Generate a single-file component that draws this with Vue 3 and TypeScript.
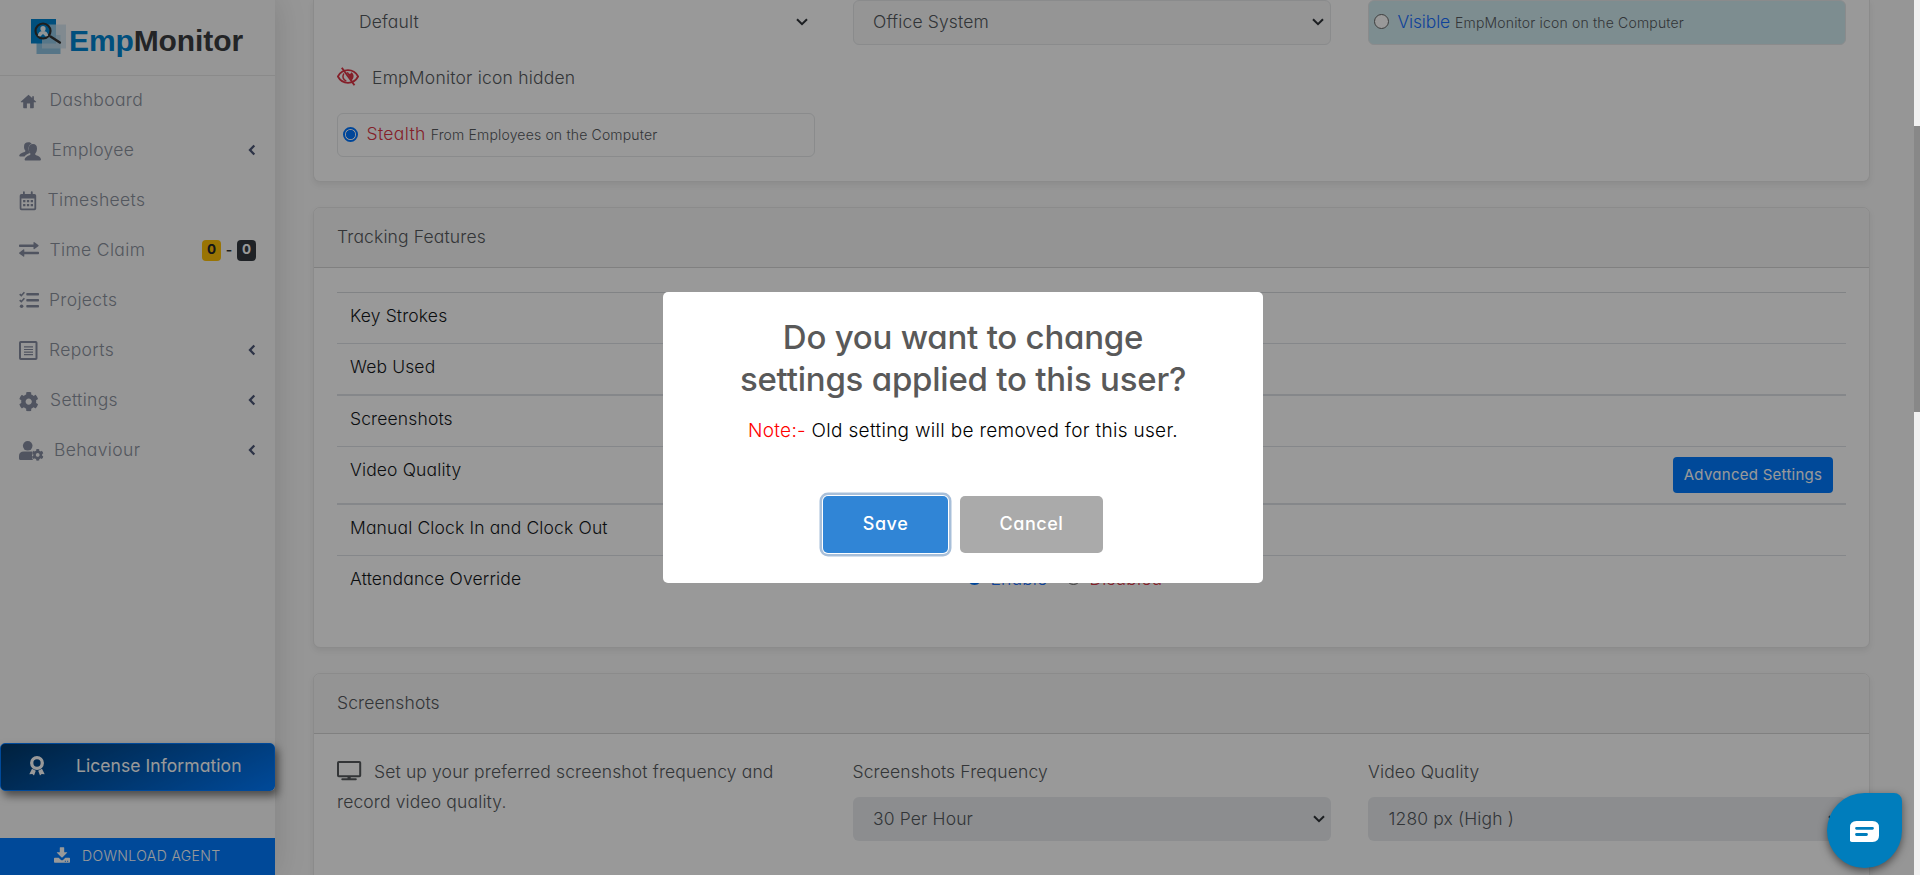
<script setup lang="ts">
interface NavItem {
  icon: string
  label: string
  iconWidth: number
  gap: number
  arrow?: boolean
  badges?: boolean
}

const nav: NavItem[] = [
  { icon: 'home', label: 'Dashboard', iconWidth: 18, gap: 12.5 },
  { icon: 'users', label: 'Employee', iconWidth: 22, gap: 10.5, arrow: true },
  { icon: 'calendar', label: 'Timesheets', iconWidth: 18, gap: 10.5 },
  { icon: 'exchange', label: 'Time Claim', iconWidth: 20, gap: 10.5, badges: true },
  { icon: 'tasks', label: 'Projects', iconWidth: 20, gap: 10 },
  { icon: 'report', label: 'Reports', iconWidth: 19, gap: 11, arrow: true },
  { icon: 'cog', label: 'Settings', iconWidth: 20, gap: 11, arrow: true },
  { icon: 'usercog', label: 'Behaviour', iconWidth: 25, gap: 10, arrow: true },
]

interface FeatureRow {
  label: string
  kind: string
  advanced?: boolean
  radios?: boolean
}

const features: FeatureRow[] = [
  { label: 'Key Strokes', kind: 'first' },
  { label: 'Web Used', kind: '' },
  { label: 'Screenshots', kind: 'thick' },
  { label: 'Video Quality', kind: 'tall', advanced: true },
  { label: 'Manual Clock In and Clock Out', kind: 'thick' },
  { label: 'Attendance Override', kind: '', radios: true },
]

const cogPath =
  'M487.4 315.7l-42.6-24.6c4.3-23.2 4.3-47 0-70.2l42.6-24.6c4.9-2.8 7.1-8.6 5.5-14-11.1-35.6-30-67.8-54.7-94.6-3.8-4.1-10-5.1-14.8-2.3L380.8 110c-17.9-15.4-38.5-27.3-60.8-35.1V25.8c0-5.6-3.9-10.5-9.4-11.7-36.7-8.2-74.3-7.8-109.2 0-5.5 1.2-9.4 6.1-9.4 11.7V75c-22.2 7.9-42.8 19.8-60.8 35.1L88.7 85.5c-4.9-2.8-11-1.9-14.8 2.3-24.7 26.7-43.6 58.9-54.7 94.6-1.7 5.4.6 11.2 5.5 14L67.3 221c-4.3 23.2-4.3 47 0 70.2l-42.6 24.6c-4.9 2.8-7.1 8.6-5.5 14 11.1 35.6 30 67.8 54.7 94.6 3.8 4.1 10 5.1 14.8 2.3l42.6-24.6c17.9 15.4 38.5 27.3 60.8 35.1v49.2c0 5.6 3.9 10.5 9.4 11.7 36.7 8.2 74.3 7.8 109.2 0 5.5-1.2 9.4-6.1 9.4-11.7v-49.2c22.2-7.9 42.8-19.8 60.8-35.1l42.6 24.6c4.9 2.8 11 1.9 14.8-2.3 24.7-26.7 43.6-58.9 54.7-94.6 1.5-5.5-.7-11.3-5.6-14.1zM256 336c-44.1 0-80-35.9-80-80s35.9-80 80-80 80 35.9 80 80-35.9 80-80 80z'
</script>

<template>
  <div class="app">
    <aside class="sidebar">
      <div class="brand">
        <svg class="brand-mark" width="36" height="36" viewBox="0 0 36 36">
          <rect x="5.500" y="16" width="24" height="19" fill="#8fc3e2" />
          <rect x="0" y="0" width="25" height="24.500" fill="#0084d1" />
          <rect x="11" y="5.500" width="24" height="24" fill="#c9dfec" opacity=".72" />
          <circle cx="12" cy="12" r="7.500" fill="#0084d1" stroke="#333" stroke-width="2.200" />
          <circle cx="12" cy="9.700" r="2.600" fill="#f4f8fb" />
          <path d="M6.800 16.500c.5-3.300 2.300-4.500 5.200-4.500s4.700 1.200 5.200 4.500c-1 .8-2 1-2.600 1L12 15l-2.600 2.500c-1 0-1.900-.3-2.600-1z" fill="#f4f8fb" />
          <path d="M19.500 17.500l9.300 6" stroke="#333" stroke-width="2.600" stroke-linecap="round" />
        </svg>
        <span class="brand-name"><span class="brand-emp">Emp</span>Monitor</span>
      </div>

      <nav class="menu">
        <a v-for="item in nav" :key="item.label" class="menu-item">
          <svg class="menu-icon" :width="item.iconWidth" height="24" :viewBox="`0 0 ${item.iconWidth} 24`" :style="{ marginRight: item.gap + 'px' }">
            <path v-if="item.icon === 'home'" d="M9.500 6.700L1.700 13.700l.3.600h2.200V19.500q0 .7.7.7h3V15.500h3.200v4.700h3q.7 0 .7-.7V14.300h2.200l.2-.6-2.300-2V8.200h-1.700v1.900z" />
            <g v-else-if="item.icon === 'users'">
              <path d="M9.300 4.200c2 0 2.800.6 3.300 1.500-2.700 1-3.500 3.400-2.800 6.800.2 1 .8 1.600 1.300 2.400-1.900.7-4.400 1.500-5.600 3.600H1c-.7 0-.9-.5-.7-1.200.7-1.900 3.200-2.500 5.300-3.300.9-.4 1-1.100.5-1.700C4.900 10.700 5 9.700 5.100 7.800 5.200 5.500 6.700 4.200 9.300 4.200z" />
              <path d="M14 6c2.700 0 4 1.700 4 4.400 0 2.200-.7 3.800-1.700 5-.4.800-.1 1.500.8 1.900 2 .8 4.200 1.500 4.800 3.800.2.900-.2 1.300-.9 1.300H6.500c-.7 0-1-.6-.8-1.300.6-2.200 2.800-3 4.800-3.800.9-.4 1.200-1.100.8-1.900-1-1.200-1.500-2.800-1.500-5C9.800 7.700 11.300 6 14 6z" />
            </g>
            <g v-else-if="item.icon === 'calendar'">
              <path fill-rule="evenodd" d="M4 4.300q0-1 .9-1t.9 1V6h6V4.300q0-1 1-1t.9 1V6h1.800Q17.200 6 17.200 7.800v12.700q0 1.700-1.700 1.700h-13Q.7 22.200.7 20.500V7.800Q.7 6 2.500 6H4zM2.400 10.400v9.700q0 .5.500.5h12q.5 0 .5-.5v-9.700z" />
              <path d="M4.100 12h2.300v2.300H4.100zm3.800 0h2.300v2.300H7.900zm3.800 0H14v2.300h-2.300zm-7.600 4h2.300v2.300H4.100zm3.800 0h2.300v2.300H7.900zm3.800 0H14v2.300h-2.300z" />
            </g>
            <path v-else-if="item.icon === 'exchange'" d="M.8 6.500h13.700V4.700q0-1.200 1-.5l3.800 2.900q.6.600 0 1.100l-3.800 2.900q-1 .7-1-.5V8.900H.8Q0 8.900 0 8.200V7.200q0-.7.800-.7zm18.400 7.300H5.300V12q0-1.200-1-.5L.4 14.500q-.7.600 0 1.200l3.900 2.800q1 .7 1-.5v-1.800h13.900q.8 0 .8-.7v-1q0-.7-.8-.7z" />
            <g v-else-if="item.icon === 'tasks'">
              <path d="M8 5h11.300q.7 0 .7.700v1q0 .7-.7.7H8q-.7 0-.7-.7v-1Q7.300 5 8 5zm0 6h11.300q.7 0 .7.700v1q0 .7-.7.700H8q-.7 0-.7-.7v-1q0-.7.7-.7zm0 6h11.300q.7 0 .7.700v1q0 .7-.7.700H8q-.7 0-.7-.7v-1q0-.7.700-.7z" />
              <path d="M.7 6.200l1.600 1.500 3.100-3.500M.7 12.200l1.600 1.500 3.100-3.500" fill="none" stroke="currentColor" stroke-width="1.600" />
              <circle cx="2.600" cy="18.200" r="1.800" />
            </g>
            <g v-else-if="item.icon === 'report'">
              <rect x="1" y="3.900" width="16.500" height="17.200" rx=".8" fill="none" stroke="currentColor" stroke-width="2" />
              <path d="M5 8.200h9v1.200H5zm0 2.700h9v1.200H5zm0 2.600h9v1.200H5zm0 2.600h9v1.200H5z" />
            </g>
            <svg v-else-if="item.icon === 'cog'" x="-.3" y="3.600" width="20" height="20" viewBox="0 0 512 512"><path :d="cogPath" /></svg>
            <g v-else>
              <circle cx="8.700" cy="7.800" r="4.800" />
              <path d="M5 13.500h7.500q.6 0 1.200.3c-.8.800-.8 1.600-.2 2.400-.7 1.200-.7 2.400 0 3.400-.4.800-.2 1.600.6 2.400H1.500Q0 22 0 20.500V18q0-4.500 5-4.500z" />
              <svg x="12.700" y="10.900" width="12" height="12" viewBox="0 0 512 512"><path :d="cogPath" /></svg>
            </g>
          </svg>
          <span class="menu-label">{{ item.label }}</span>
          <svg v-if="item.arrow" class="menu-arrow" width="8" height="12" viewBox="0 0 8 12">
            <path d="M6.300 1.500L2 6l4.300 4.500" fill="none" stroke="currentColor" stroke-width="2.300" />
          </svg>
          <span v-if="item.badges" class="badges">
            <b class="badge warning">0</b><span class="dash">-</span><b class="badge dark">0</b>
          </span>
        </a>
      </nav>

      <button class="license">
        <svg width="16" height="20" viewBox="0 0 16 20">
          <circle cx="8" cy="7" r="5.300" fill="none" stroke="currentColor" stroke-width="3.300" />
          <path d="M3 12.700l3.800 2L5 19.600 3.300 18l-3 .2zM13 12.700l-3.800 2 1.800 4.900 1.700-1.600 3 .2z" fill="currentColor" />
        </svg>
        <span>License Information</span>
      </button>
      <a class="download">
        <svg width="16" height="16" viewBox="0 0 16 16">
          <path fill="currentColor" fill-rule="evenodd" d="M6.300.2h3.400q.5 0 .5.500v4.500h2.700q.6.100.2.600L8.400 10.400q-.4.300-.8 0L2.900 5.800q-.4-.5.200-.6h2.700V.7q0-.5.500-.5zM.8 10.800h3.900l2 1.900q1.300 1 2.600 0l2-1.900h3.900q.8 0 .8.700v3.600q0 .7-.8.700H.8q-.8 0-.8-.7v-3.600q0-.7.800-.7zm10 2.900v1.100h1.100v-1.100zm2.300 0v1.100h1.100v-1.100z" />
        </svg>
        <span>DOWNLOAD AGENT</span>
      </a>
    </aside>

    <main class="content">
      <section class="card card-top">
        <div class="grid">
          <div class="column">
            <div class="select plain">
              <span>Default</span>
              <svg width="12" height="8" viewBox="0 0 12 8"><path d="M1 1.200l5 5 5-5" fill="none" stroke="currentColor" stroke-width="2" /></svg>
            </div>
            <div class="hidden-note">
              <svg width="22" height="20" viewBox="0 0 22 20">
                <path d="M.9 9.500C3.200 5.200 6.700 3.200 11 3.200s7.800 2 10.100 6.300c-2.300 4.300-5.800 6.300-10.100 6.300S3.200 13.800.9 9.500z" fill="none" stroke="currentColor" stroke-width="1.800" />
                <path d="M6.800 6.500c-1.800 3.500-.7 6.200 2.500 7.600" fill="none" stroke="currentColor" stroke-width="1.500" />
                <path d="M9.500 5.500l1.700-.4c.1 1.300.9 2 2.300 1.700l.8-1.500c2 1.200 2.600 3 2.200 4.800-.2 1.500-1 2.500-2.100 3.300z" fill="currentColor" />
                <path d="M4.800.7l12.700 17.600" stroke="currentColor" stroke-width="1.900" />
              </svg>
              <span>EmpMonitor icon hidden</span>
            </div>
            <label class="option">
              <i class="radio checked"></i><span class="danger">Stealth</span><small>From Employees on the Computer</small>
            </label>
          </div>
          <div class="column">
            <div class="select soft">
              <span>Office System</span>
              <svg width="12" height="8" viewBox="0 0 12 8"><path d="M1 1.200l5 5 5-5" fill="none" stroke="currentColor" stroke-width="2" /></svg>
            </div>
          </div>
          <div class="column">
            <label class="option visible-option">
              <i class="radio"></i><span class="primary">Visible</span><small>EmpMonitor icon on the Computer</small>
            </label>
          </div>
        </div>
      </section>

      <section class="card card-features">
        <header class="card-header">Tracking Features</header>
        <div class="features">
          <div v-for="row in features" :key="row.label" class="feature" :class="row.kind">
            <span class="feature-name">{{ row.label }}</span>
            <span v-if="row.radios" class="feature-radios">
              <i class="radio checked"></i><span class="primary">Enable</span>
              <i class="radio"></i><span class="danger">Disabled</span>
            </span>
            <button v-if="row.advanced" class="advanced">Advanced Settings</button>
          </div>
        </div>
      </section>

      <section class="card card-shots">
        <header class="card-header">Screenshots</header>
        <div class="grid shots">
          <p class="intro">
            <svg width="25" height="20" viewBox="0 0 25 20">
              <rect x="1" y="1" width="22.200" height="14.200" rx=".8" fill="none" stroke="currentColor" stroke-width="2" />
              <path d="M10.500 15h3.200v2.200h5.200q.9 0 .9 1t-.9 1H5.200q-.9 0-.9-1t.9-1h5.300z" fill="currentColor" />
            </svg>Set up your preferred screenshot frequency and record video quality.
          </p>
          <div class="column">
            <div class="field-label">Screenshots Frequency</div>
            <div class="select disabled">
              <span>30 Per Hour</span>
              <svg width="12" height="8" viewBox="0 0 12 8"><path d="M1 1.200l5 5 5-5" fill="none" stroke="currentColor" stroke-width="2" /></svg>
            </div>
          </div>
          <div class="column">
            <div class="field-label">Video Quality</div>
            <div class="select disabled">
              <span>1280 px (High )</span>
              <svg width="12" height="8" viewBox="0 0 12 8"><path d="M1 1.200l5 5 5-5" fill="none" stroke="currentColor" stroke-width="2" /></svg>
            </div>
          </div>
        </div>
      </section>
    </main>

    <div class="overlay">
      <div class="modal">
        <h2>Do you want to change<br />settings applied to this user?</h2>
        <p><span class="note">Note:-</span> Old setting will be removed for this user.</p>
        <div class="actions">
          <button class="save">Save</button>
          <button class="cancel">Cancel</button>
        </div>
      </div>
    </div>

    <div class="scrollbar"><div class="thumb"></div></div>

    <button class="chat" aria-label="Chat">
      <svg width="29" height="21" viewBox="0 0 29 21">
        <path d="M6.500 0h16Q29 0 29 6.500v8Q29 21 22.500 21H1.800Q0 21 0 19.200V6.500Q0 0 6.500 0z" fill="#fff" />
        <path d="M6.500 7.300h16M6.500 13.500h10" stroke="#007dbc" stroke-width="2.800" stroke-linecap="round" />
      </svg>
    </button>
  </div>
</template>

<style>
body {
  overflow: hidden;
}
</style>

<style scoped>
.app {
  position: relative;
  display: flex;
  width: 1920px;
  height: 875px;
  overflow: hidden;
  background: #fafafa;
  font-family: Inter, "Liberation Sans", sans-serif;
  font-feature-settings: "cv11";
  font-size: 17.5px;
  font-weight: 350;
  letter-spacing: 0.008em;
  line-height: 30px;
  color: #55595d;
}
.app * {
  box-sizing: border-box;
}
button {
  border: 0;
  padding: 0;
  font: inherit;
  font-feature-settings: inherit;
  letter-spacing: inherit;
}
svg {
  flex: none;
  display: block;
}

/* Sidebar */
.sidebar {
  position: relative;
  z-index: 1;
  display: flex;
  flex-direction: column;
  width: 275px;
  height: 875px;
  background: #fafafa;
  box-shadow: 0 0 30px rgba(0, 0, 0, 0.14);
}
.brand {
  display: flex;
  height: 76px;
  padding: 19px 0 0 31px;
  border-bottom: 1px solid #e6e6e6;
}
.brand-name {
  margin: 5px 0 0 2px;
  font: bold 30px/34px "Liberation Sans", Arial, sans-serif;
  letter-spacing: -0.1px;
  color: #3b3d40;
}
.brand-emp {
  color: #0084d1;
}
.menu-item {
  display: flex;
  align-items: center;
  height: 50px;
  padding: 0 19px 2px;
  color: #8b919d;
}
.menu-icon {
  fill: currentColor;
  color: #858ca0;
}
.menu-label {
  letter-spacing: 0.02em;
}
.menu-arrow {
  margin-left: auto;
  color: #4b5676;
}
.badges {
  display: flex;
  align-items: center;
  margin-left: auto;
  font-size: 14px;
  color: #333;
}
.badge {
  width: 19px;
  height: 21px;
  border-radius: 4px;
  font-weight: 700;
  font-size: 13.5px;
  line-height: 19px;
  text-align: center;
  letter-spacing: 0;
}
.dash {
  width: 16px;
  font-weight: 600;
  line-height: 20px;
  text-align: center;
}
.warning {
  background: #ffc107;
  color: #212529;
}
.dark {
  background: #343a40;
  color: #fff;
}
.license {
  display: flex;
  align-items: center;
  width: 275px;
  height: 48px;
  margin-top: 267px;
  padding: 0 0 2px 28px;
  border: 1px solid #007bff;
  border-radius: 5px;
  background: linear-gradient(155deg, #003767 0%, #007bff 100%);
  box-shadow: 3px 5px 8px rgba(0, 0, 0, 0.5);
  color: #fff;
  font-size: 17.5px;
  font-weight: 400;
  letter-spacing: 0.004em;
}
.license span {
  margin-left: 31px;
}
.download {
  display: flex;
  align-items: center;
  height: 37px;
  margin-top: 47px;
  padding: 0 0 4px 54px;
  background: #007bff;
  color: #fff;
  font-size: 14px;
  letter-spacing: 0.027em;
}
.download span {
  margin: 2px 0 0 12px;
}

/* Content */
.content {
  flex: 1;
  padding-left: 38px;
}
.card {
  width: 1557px;
  border: 1px solid #e8e8e8;
  border-radius: 7px;
  background: #fff;
  box-shadow: 0 3px 6px rgba(0, 0, 0, 0.07);
}
.card-top {
  height: 182px;
  border-top: 0;
  border-radius: 0 0 7px 7px;
}
.card-features {
  height: 441px;
  margin-top: 25px;
}
.card-shots {
  height: 300px;
  margin-top: 25px;
}
.card-header {
  height: 60px;
  padding: 14px 23px 0;
  border-bottom: 1px solid #d6d6d6;
  border-radius: 6px 6px 0 0;
  background: #f7f7f7;
}
.grid {
  display: grid;
  grid-template-columns: repeat(3, 478px);
  column-gap: 37.5px;
  padding-left: 23px;
}
.select {
  display: flex;
  align-items: center;
  justify-content: space-between;
  height: 45px;
  padding: 0 6px 1px 19.5px;
  border: 1px solid #e6e8ea;
  border-radius: 6px;
  color: #54595e;
}
.select svg {
  color: #2f3338;
}
.plain {
  border-color: transparent;
  padding-left: 21px;
}
.soft {
  background: #f8f8f8;
}
.disabled {
  height: 44px;
  border: 0;
  padding-left: 20.5px;
  background: #e9ecef;
}
.hidden-note {
  display: flex;
  align-items: center;
  height: 30px;
  margin-top: 18px;
  letter-spacing: 0.012em;
}
.hidden-note svg {
  color: #dc3545;
  margin: 0 13px 2px 0;
}
.option {
  display: flex;
  align-items: center;
  height: 44px;
  margin-top: 20px;
  padding: 0 0 2px 5px;
  border: 1px solid #e6e8ea;
  border-radius: 6px;
}
.option > span {
  margin: 0 5px 0 8.5px;
}
.option small {
  padding-top: 2px;
  font-size: 14px;
  letter-spacing: 0.012em;
}
.option > .danger {
  letter-spacing: 0.02em;
}
.visible-option {
  height: 45px;
  margin-top: 0;
  padding-bottom: 2px;
  background: #d1ecf1;
}
.visible-option > .primary {
  letter-spacing: -0.01em;
}
.radio {
  width: 15px;
  height: 15px;
  border: 1.5px solid #666;
  border-radius: 50%;
  background: #fff;
}
.checked {
  border: 2px solid #0075ff;
  background: radial-gradient(circle, #0075ff 4.3px, #fff 5px);
}
.danger {
  color: #dc3545;
}
.primary {
  color: #1a6fff;
}
.features {
  padding: 24px 23px 0;
}
.feature {
  display: flex;
  height: 51px;
  padding: 8px 13px 0;
  border-top: 1px solid #dee2e6;
  color: #15181b;
}
.feature.first {
  border-top-color: #d8dbde;
}
.feature.thick {
  height: 52px;
  border-top: 2px solid #dee2e6;
}
.feature.tall {
  height: 57px;
}
.feature-name {
  width: 617px;
}
.feature-radios {
  display: flex;
  align-items: center;
  height: 30px;
}
.feature-radios .radio {
  margin: 0 8.5px 3px 0;
}
.feature-radios span {
  width: 75.500px;
}
.advanced {
  width: 160px;
  height: 36px;
  margin: 2px 0 0 auto;
  border-radius: 4px;
  background: #007bff;
  color: #fff;
  font-size: 15px;
  font-weight: 400;
  letter-spacing: 0.018em;
}
.shots {
  padding-top: 23px;
}
.intro {
  margin: 0;
  padding-right: 40px;
}
.intro svg {
  display: inline-block;
  margin: 0 12px -3px 0;
}
.field-label {
  height: 40px;
}

/* Dialog */
.overlay {
  position: absolute;
  z-index: 2;
  inset: 0 6px 0 0;
  display: flex;
  align-items: center;
  justify-content: center;
  background: rgba(0, 0, 0, 0.4);
}
.modal {
  width: 600px;
  height: 291px;
  margin-left: 12px;
  padding-top: 24px;
  border-radius: 5px;
  background: #fff;
  text-align: center;
}
.modal h2 {
  margin: 0;
  color: #595959;
  font-size: 33px;
  font-weight: 550;
  line-height: 42px;
  letter-spacing: -0.007em;
}
.modal p {
  margin: 16px 0 0;
  color: #000;
  font-size: 19px;
  letter-spacing: 0.016em;
}
.note {
  color: #f00;
}
.actions {
  display: flex;
  justify-content: center;
  gap: 12px;
  margin: 50px 0 0;
}
.actions button {
  height: 57px;
  padding-bottom: 2px;
  border-radius: 5px;
  color: #fff;
  font-size: 18px;
  font-weight: 450;
  letter-spacing: 0.03em;
}
.actions .save {
  width: 125px;
  background: #3085d6;
  box-shadow: 0 0 0 1px #fff, 0 0 0 3.500px #a8bfd9;
}
.actions .cancel {
  width: 143px;
  background: #aaa;
}

.scrollbar {
  position: absolute;
  z-index: 3;
  inset: 0 0 0 auto;
  width: 6px;
  padding-top: 126px;
  background: #f1f1f1;
}
.thumb {
  height: 286px;
  background: #888;
}
.chat {
  position: absolute;
  z-index: 3;
  right: 18px;
  bottom: 7px;
  display: flex;
  align-items: center;
  justify-content: center;
  width: 75px;
  height: 75px;
  padding-top: 2px;
  border-radius: 50% 8px 50% 50%;
  background: #007dbc;
  box-shadow: 0 3px 8px rgba(0, 0, 0, 0.5);
}
</style>
